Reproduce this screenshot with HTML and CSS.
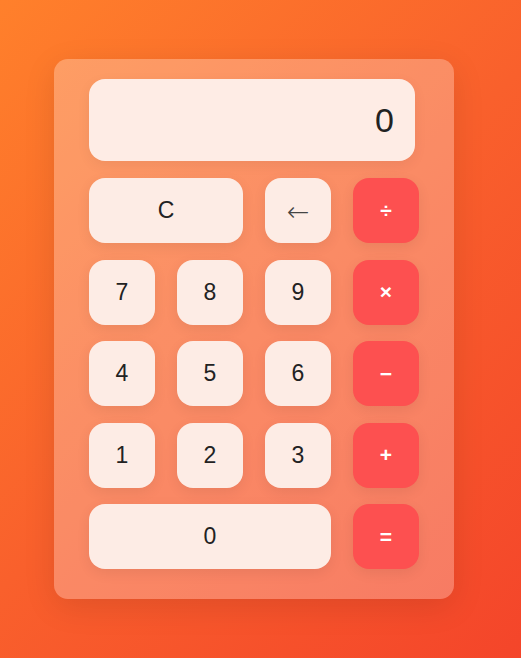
FILE: index.html
```html
<!DOCTYPE html>
<html lang="en">
<head>
<meta charset="utf-8">
<title>Calculator</title>
<link rel="stylesheet" href="styles.css">
</head>
<body>
<div class="calc">
  <div class="display">0</div>
  <div class="keys">
    <button class="key span2">C</button>
    <button class="key arrow">←</button>
    <button class="key op">÷</button>
    <button class="key">7</button>
    <button class="key">8</button>
    <button class="key">9</button>
    <button class="key op">×</button>
    <button class="key">4</button>
    <button class="key">5</button>
    <button class="key">6</button>
    <button class="key op">−</button>
    <button class="key">1</button>
    <button class="key">2</button>
    <button class="key">3</button>
    <button class="key op">+</button>
    <button class="key span3">0</button>
    <button class="key op">=</button>
  </div>
</div>
</body>
</html>
```
FILE: styles.css
```css
html, body {
  margin: 0;
  height: 100%;
}
body {
  background: linear-gradient(135deg, #ff802b 0%, #f9602c 50%, #f4452a 100%);
  font-family: "Liberation Sans", Arial, sans-serif;
  display: flex;
  align-items: center;
  padding-left: 54px;
  box-sizing: border-box;
}
.calc {
  width: 400px;
  box-sizing: border-box;
  padding: 20px 35px 30px;
  background: rgba(255, 255, 255, 0.27);
  border-radius: 14px;
  box-shadow: 0 8px 32px rgba(0, 0, 0, 0.1);
}
.display {
  width: 326px;
  height: 82px;
  box-sizing: border-box;
  background: #feece5;
  border-radius: 16px;
  display: flex;
  align-items: center;
  justify-content: flex-end;
  padding-right: 21px;
  font-size: 34px;
  color: #222;
  margin-bottom: 17px;
  box-shadow: 0 4px 14px rgba(0, 0, 0, 0.06);
}
.keys {
  display: grid;
  grid-template-columns: repeat(4, 66px);
  grid-auto-rows: 65px;
  column-gap: 22px;
  row-gap: 16.5px;
}
.key {
  border: none;
  border-radius: 16px;
  background: #fdece5;
  color: #222;
  font-family: inherit;
  font-size: 23px;
  padding: 0;
  box-shadow: 0 4px 14px rgba(0, 0, 0, 0.07);
}
.span2 { grid-column: span 2; }
.span3 { grid-column: span 3; }
.arrow {
  font-family: "DejaVu Sans", sans-serif;
  font-weight: 200;
  font-size: 27px;
  color: #444;
  padding-top: 1px;
}
.op {
  background: #fd5050;
  color: #fff;
  font-weight: bold;
  font-size: 21px;
}
```
